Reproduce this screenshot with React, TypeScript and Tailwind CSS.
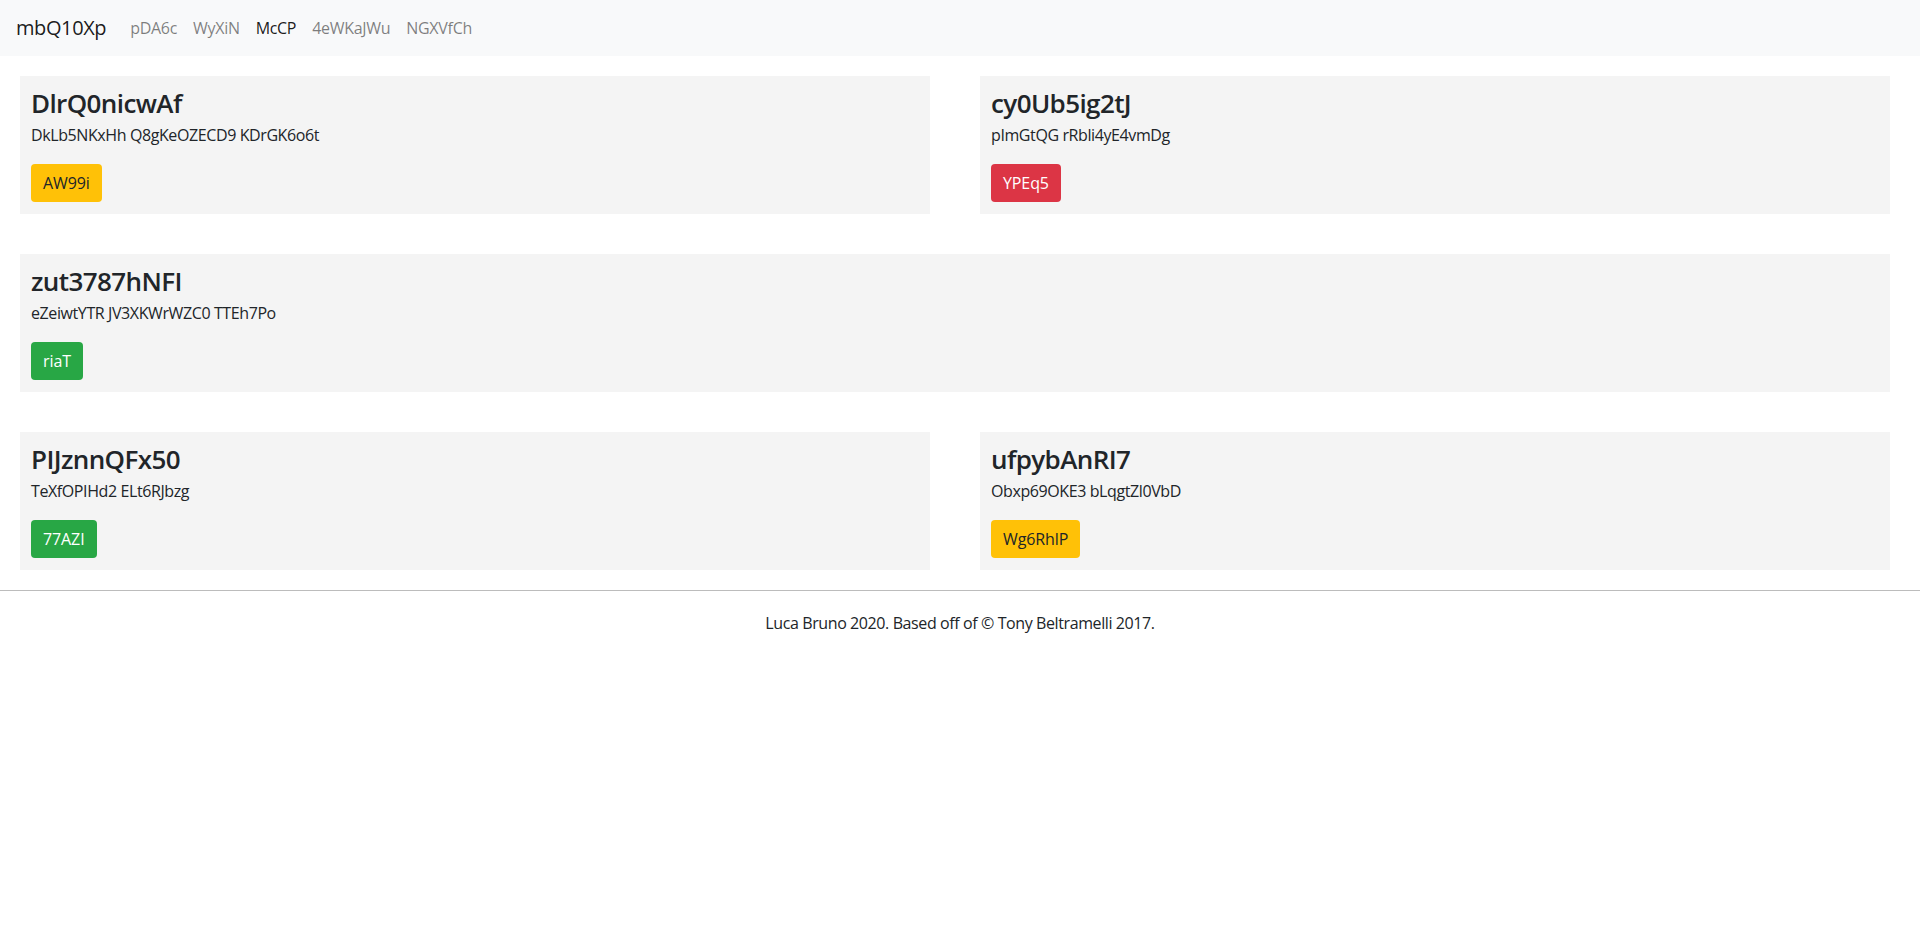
const font = { fontFamily: '"Open Sans", "Noto Sans", Arial, sans-serif' };

type Tile = {
  title: string;
  text: string;
  button: string;
  tone: "yellow" | "red" | "green";
};

const tones = {
  yellow: "bg-[#ffc107] text-[#212529]",
  red: "bg-[#dc3545] text-white",
  green: "bg-[#28a745] text-white",
};

function Card({ title, text, button, tone }: Tile) {
  return (
    <div className="flex-1 bg-[#f4f4f4] pl-[11px] pr-[10px] pt-[10px] pb-[12px]">
      <h3 className="text-[26px] leading-[34px] font-semibold tracking-[-0.6px] text-[#212529] mb-[3px]">{title}</h3>
      <p className="text-[16px] leading-6 tracking-[-0.4px] text-[#212529] mb-[17px]">{text}</p>
      <button className={`h-[38px] px-3 rounded text-[16px] leading-6 tracking-[-0.1px] ${tones[tone]}`}>{button}</button>
    </div>
  );
}

export default function App() {
  const links = ["pDA6c", "WyXiN", "McCP", "4eWKaJWu", "NGXVfCh"];
  return (
    <div className="min-h-screen bg-white text-[#212529]" style={font}>
      <nav className="h-14 bg-[#f8f9fa] flex items-center px-4">
        <span className="text-[20px] leading-[30px] tracking-[-0.4px] mr-4 text-black/90">mbQ10Xp</span>
        <div className="flex">
          {links.map((l) => (
            <a key={l} className={`px-2 text-[16px] leading-6 tracking-[-0.3px] ${l === "McCP" ? "text-black/90" : "text-black/50"}`}>
              {l}
            </a>
          ))}
        </div>
      </nav>

      <div className="pl-5 pr-[30px] pt-5 flex flex-col gap-10">
        <div className="flex gap-[50px]">
          <Card title="DlrQ0nicwAf" text="DkLb5NKxHh Q8gKeOZECD9 KDrGK6o6t" button="AW99i" tone="yellow" />
          <Card title="cy0Ub5ig2tJ" text="pImGtQG rRbli4yE4vmDg" button="YPEq5" tone="red" />
        </div>
        <div className="flex">
          <Card title="zut3787hNFI" text="eZeiwtYTR JV3XKWrWZC0 TTEh7Po" button="riaT" tone="green" />
        </div>
        <div className="flex gap-[50px]">
          <Card title="PIJznnQFx50" text="TeXfOPIHd2 ELt6RJbzg" button="77AZI" tone="green" />
          <Card title="ufpybAnRI7" text="Obxp69OKE3 bLqgtZl0VbD" button="Wg6RhlP" tone="yellow" />
        </div>
      </div>

      <hr className="mt-5 border-t border-[#bcbcbc]" />
      <footer className="text-center text-[16px] leading-6 tracking-[-0.4px] pt-5">
        Luca Bruno 2020. Based off of © Tony Beltramelli 2017.
      </footer>
    </div>
  );
}
